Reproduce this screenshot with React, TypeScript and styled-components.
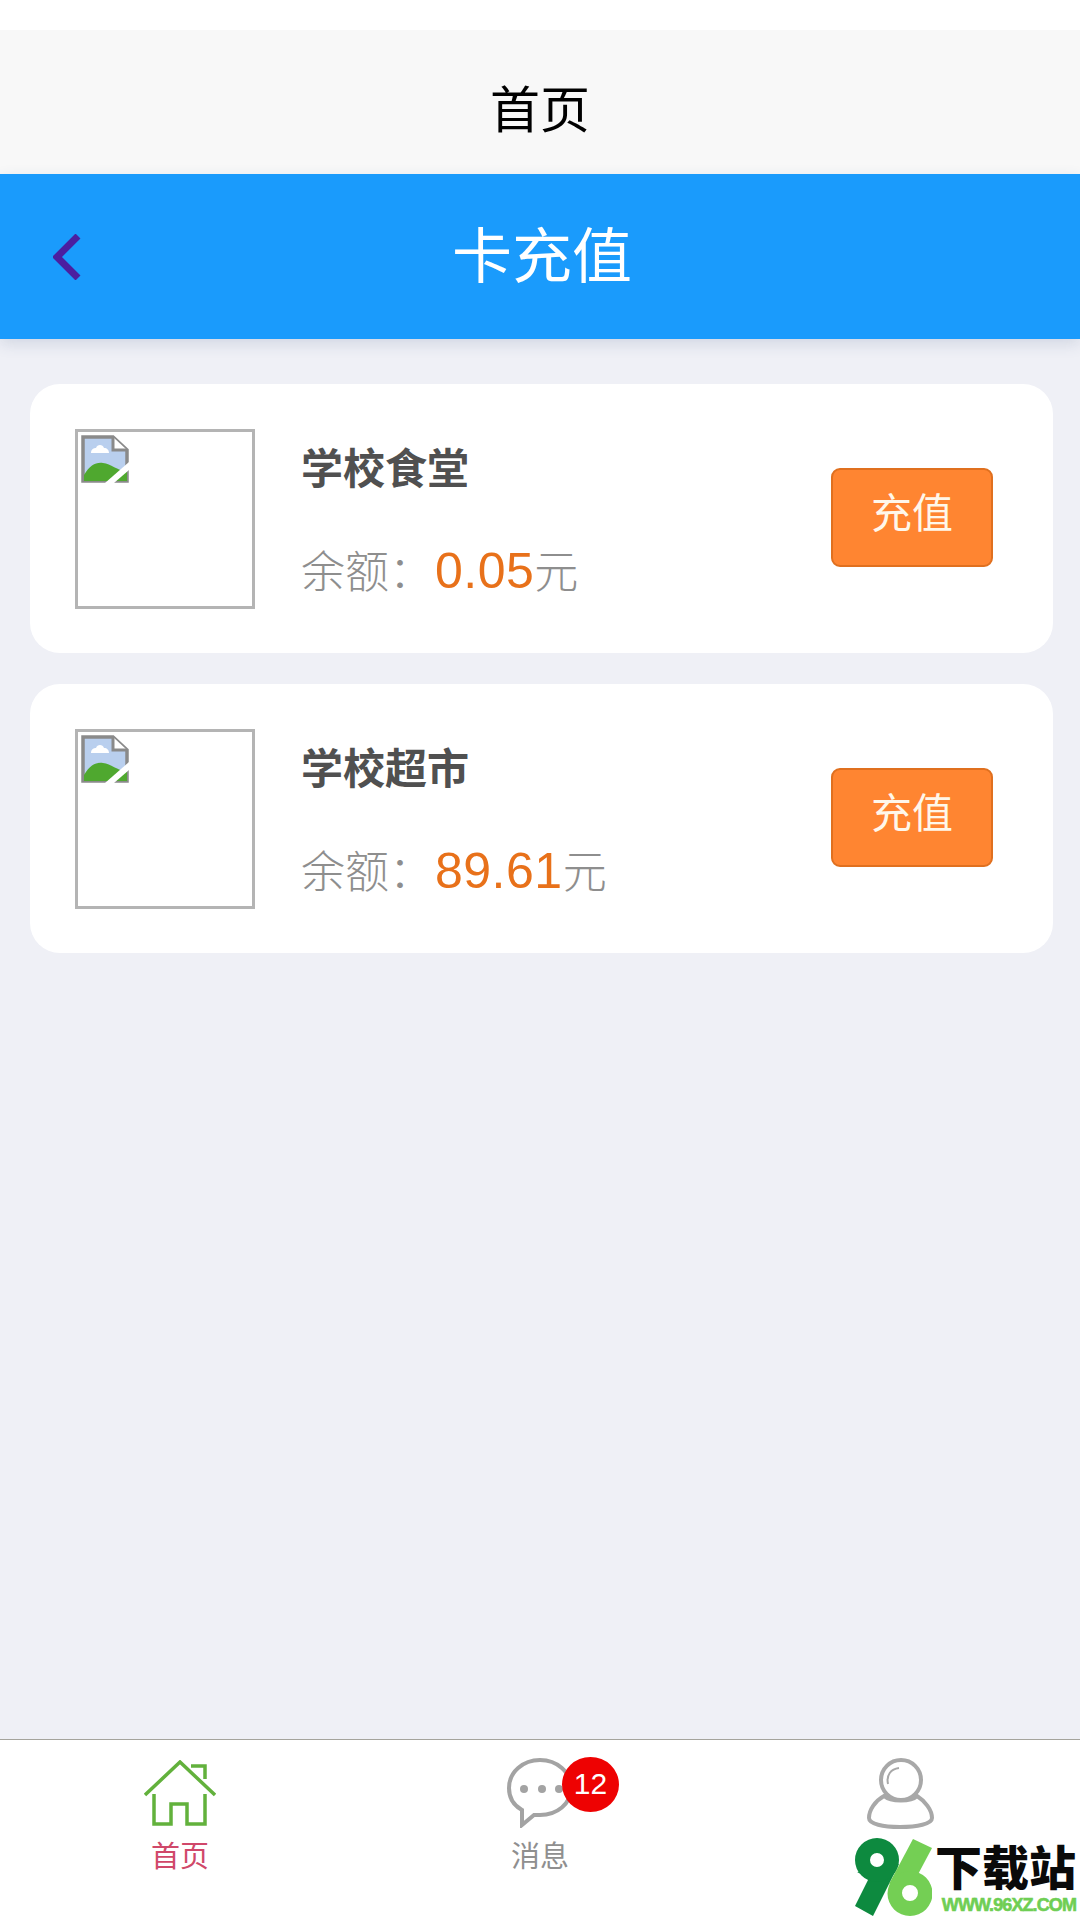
import styled, { createGlobalStyle } from "styled-components";

const cards = [
  { name: "学校食堂", amount: "0.05" },
  { name: "学校超市", amount: "89.61" },
];

const GlobalStyle = createGlobalStyle`
  * {
    box-sizing: border-box;
  }

  body {
    margin: 0;
    background: #fff;
    font-family: "Noto Sans CJK SC", "Noto Sans", sans-serif;
  }
`;

const Page = styled.div`
  display: flex;
  flex-direction: column;
  width: 1080px;
  height: 1920px;
  position: relative;
  overflow: hidden;
  background: #eff0f6;
`;

const StatusBar = styled.div`
  height: 30px;
  background: #fff;
`;

const NavBar = styled.div`
  display: flex;
  align-items: center;
  justify-content: center;
  height: 144px;
  padding-top: 8px;
  background: #f8f8f8;
  color: #000;
  font-size: 50px;
  font-weight: 400;
`;

const Header = styled.header`
  display: grid;
  grid-template-columns: 1fr auto 1fr;
  align-items: center;
  height: 165px;
  padding-left: 53px;
  position: relative;
  background: #1a9bfc;
  box-shadow: 0 5px 14px rgba(60, 90, 130, 0.16);
`;

const BackIcon = styled.svg`
  display: block;
  width: 28px;
  height: 46px;
  fill: none;
  stroke: #4b1ea0;
  stroke-width: 7;
`;

const HeaderTitle = styled.h1`
  margin: -10px 0 0 -49px;
  color: #fff;
  font-size: 60px;
  font-weight: 400;
  line-height: 80px;
`;

const Content = styled.main`
  display: flex;
  flex: 1;
  flex-direction: column;
  gap: 31px;
  padding: 45px 27px 0 30px;
`;

const Card = styled.article`
  display: flex;
  align-items: center;
  height: 269px;
  padding: 0 60px 0 45px;
  border-radius: 30px;
  background: #fff;
`;

const Thumb = styled.div`
  flex: none;
  width: 180px;
  height: 180px;
  padding: 3px;
  border: 3px solid #b4b4b4;
`;

const BrokenIcon = styled.svg`
  display: block;
  width: 48px;
  height: 48px;
`;

const Info = styled.div`
  display: flex;
  flex: 1;
  flex-direction: column;
  gap: 39px;
  margin-left: 46px;
  padding-top: 4px;
`;

const Name = styled.h2`
  margin: -4px 0 4px;
  color: #505050;
  font-size: 42px;
  font-weight: 700;
  line-height: 60px;
`;

const Balance = styled.p`
  display: flex;
  align-items: baseline;
  margin: 0;
  color: #8e8e8e;
  font-size: 44px;
  font-weight: 300;
  line-height: 60px;
`;

const Label = styled.span`
  width: 134px;
`;

const Amount = styled.span`
  color: #e8711a;
  font-family: "Liberation Sans", sans-serif;
  font-size: 50px;
  letter-spacing: 0.5px;
`;

const TopUp = styled.button`
  flex: none;
  width: 162px;
  height: 99px;
  margin-bottom: 2px;
  padding: 0 0 16px;
  border: 2px solid #e0701f;
  border-radius: 9px;
  background: #ff8531;
  color: #fff7ea;
  font-family: inherit;
  font-size: 41px;
  font-weight: 400;
`;

const TabBar = styled.nav`
  display: grid;
  grid-template-columns: repeat(3, 1fr);
  flex: none;
  height: 181px;
  padding-top: 17px;
  border-top: 1px solid #a5a49c;
  background: #fff;
`;

const Tab = styled.div`
  display: flex;
  flex-direction: column;
  align-items: center;
`;

const IconBox = styled.div`
  display: flex;
  align-items: center;
  justify-content: center;
  height: 72px;
  position: relative;
`;

const TabLabel = styled.span<{ $active?: boolean }>`
  margin-top: 7px;
  color: ${({ $active }) => ($active ? "#d0486a" : "#8f8f8f")};
  font-size: 29px;
  font-weight: 400;
  line-height: 36px;
`;

const Badge = styled.span`
  position: absolute;
  top: 0;
  left: 55px;
  width: 57px;
  height: 55px;
  border-radius: 50%;
  background: #ee0202;
  color: #fff;
  font-family: "Liberation Sans", sans-serif;
  font-size: 30px;
  line-height: 54px;
  text-align: center;
`;

const Watermark = styled.div`
  display: flex;
  align-items: flex-start;
  position: absolute;
  right: 4px;
  bottom: 4px;
`;

const WatermarkText = styled.div`
  display: flex;
  flex-direction: column;
  align-items: flex-end;
  width: 141px;
  margin: 2px 0 0 3px;
`;

const SiteName = styled.span`
  color: #0a0a0a;
  font-size: 47px;
  font-weight: 900;
  line-height: 50px;
  white-space: nowrap;
`;

const SiteUrl = styled.span`
  margin-top: 7px;
  color: #6fce54;
  font-family: "Liberation Sans", sans-serif;
  font-size: 18px;
  font-weight: 700;
  letter-spacing: -0.9px;
  line-height: 16px;
  -webkit-text-stroke: 0.6px #6fce54;
  white-space: nowrap;
`;

const BrokenImage = () => (
  <BrokenIcon viewBox="0 0 48 48">
    <path d="M2 2H32L46 15V46H2Z" fill="#b9cfee" stroke="#8a8a8a" strokeWidth="3.500" />
    <path d="M32 2V15H46" fill="#fff" stroke="#8a8a8a" strokeWidth="3" />
    <path d="M10 18C10 14 13 13 15 13C16 9 22 9 23 13C26 13 28 15 28 18Z" fill="#fff" />
    <path d="M3 46V40C9 30 15 27 22 28C30 29 36 35 46 37V46Z" fill="#4fa82f" />
    <path d="M24 48L48 27V35L33 48Z" fill="#fff" />
  </BrokenIcon>
);

const HomeIcon = () => (
  <svg width="72" height="66" viewBox="0 0 72 66" fill="none" stroke="#62b13c" strokeWidth="3.500">
    <path d="M1 35L36 2L71 35" />
    <path d="M47 6H61V19" />
    <path d="M10 34V64H27V44H43V64H61V34" />
  </svg>
);

const MessageIcon = () => (
  <svg width="66" height="70" viewBox="0 0 66 70">
    <path
      d="M15 52C6 47 2 39 2 30C2 14 16 2 33 2C50 2 64 14 64 30C64 46 50 57 33 57C31 57 29 57 27 57L15 67Z"
      fill="none"
      stroke="#a3a3a3"
      strokeWidth="4"
    />
    <circle cx="17" cy="31" r="4" fill="#a3a3a3" />
    <circle cx="35" cy="31" r="4" fill="#a3a3a3" />
    <circle cx="52" cy="31" r="4" fill="#a3a3a3" />
  </svg>
);

const UserIcon = () => (
  <svg width="67" height="71" viewBox="0 0 67 71" fill="none" stroke="#a8a8a8" strokeWidth="4">
    <circle cx="34" cy="22" r="20" />
    <path d="M21 26C19 17 24 11 32 10" strokeWidth="2" />
    <path d="M17 38C8 43 2 52 2 60C2 66 16 69 33 69C50 69 65 66 65 60C65 52 58 43 50 38C44 44 24 44 17 38Z" />
  </svg>
);

const Logo = () => (
  <svg width="77" height="78" viewBox="0 0 77 78">
    <path d="M2 34L24 32L44 26L18 78L0 68L14 40Z" fill="#0d8a3f" />
    <path
      fillRule="evenodd"
      d="M22 0A22 22 0 1 1 22 44A22 22 0 1 1 22 0ZM22 15A7 7 0 1 0 22 29A7 7 0 1 0 22 15Z"
      fill="#0d8a3f"
    />
    <path d="M58 1L77 10L60 42L34 46Z" fill="#74cf54" />
    <path
      fillRule="evenodd"
      d="M55 33A22.500 22.500 0 1 1 55 78A22.500 22.500 0 1 1 55 33ZM55 47A8 8 0 1 0 55 63A8 8 0 1 0 55 47Z"
      fill="#74cf54"
    />
  </svg>
);

const App = () => (
  <Page>
    <GlobalStyle />
    <StatusBar />
    <NavBar>首页</NavBar>
    <Header>
      <BackIcon viewBox="0 0 28 46">
        <path d="M25 2L4 23L25 44" />
      </BackIcon>
      <HeaderTitle>卡充值</HeaderTitle>
    </Header>
    <Content>
      {cards.map((card) => (
        <Card key={card.name}>
          <Thumb>
            <BrokenImage />
          </Thumb>
          <Info>
            <Name>{card.name}</Name>
            <Balance>
              <Label>余额：</Label>
              <Amount>{card.amount}</Amount>元
            </Balance>
          </Info>
          <TopUp>充值</TopUp>
        </Card>
      ))}
    </Content>
    <TabBar>
      <Tab>
        <IconBox>
          <HomeIcon />
        </IconBox>
        <TabLabel $active>首页</TabLabel>
      </Tab>
      <Tab>
        <IconBox>
          <MessageIcon />
          <Badge>12</Badge>
        </IconBox>
        <TabLabel>消息</TabLabel>
      </Tab>
      <Tab>
        <IconBox>
          <UserIcon />
        </IconBox>
      </Tab>
    </TabBar>
    <Watermark>
      <Logo />
      <WatermarkText>
        <SiteName>下载站</SiteName>
        <SiteUrl>WWW.96XZ.COM</SiteUrl>
      </WatermarkText>
    </Watermark>
  </Page>
);

export default App;
